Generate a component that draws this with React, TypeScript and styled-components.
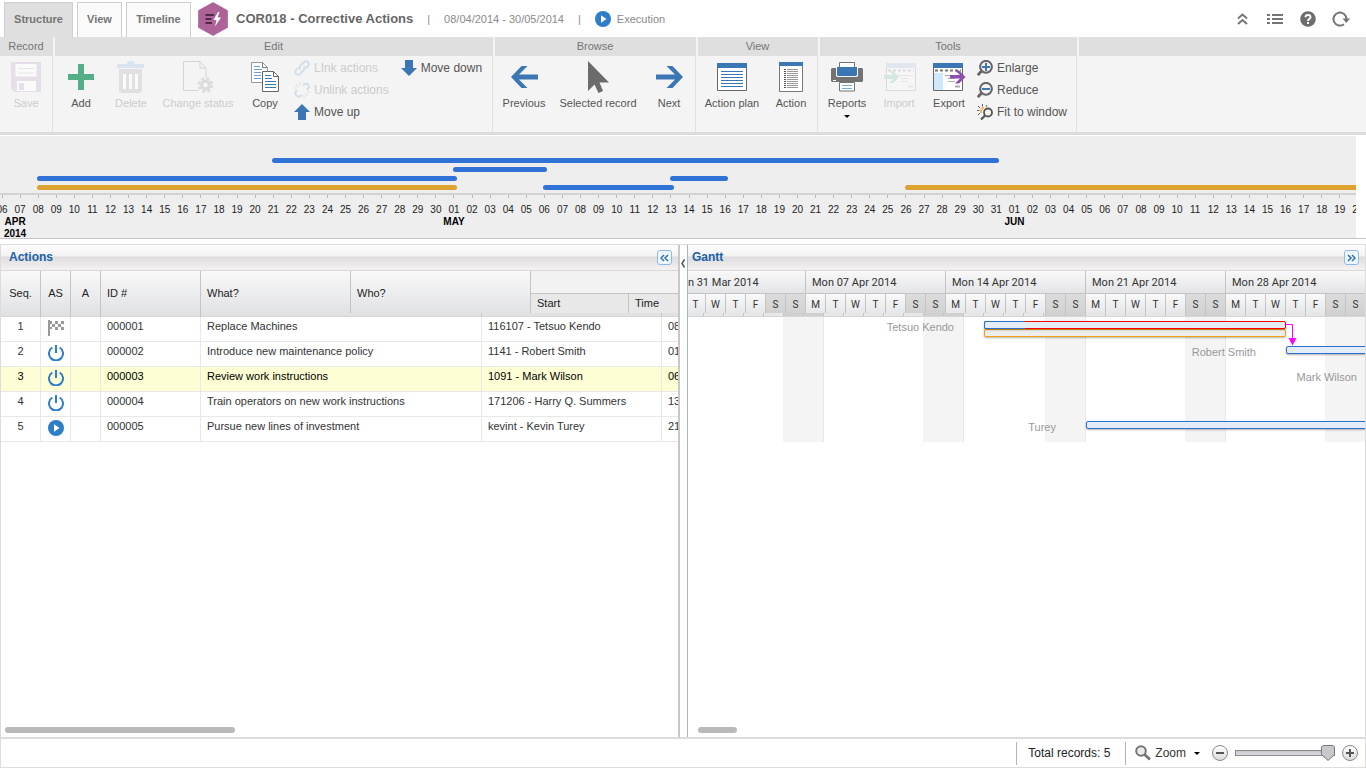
import React, { useState } from "react";
import styled, { createGlobalStyle, css } from "styled-components";

const BLUE = "#3c77b5";
const STATE_BLUE = "#2e7dc9";

const GlobalStyle = createGlobalStyle`
  *, *::before, *::after { box-sizing: border-box; }
  body { margin: 0; background: #fff; }
  body, button, input {
    font-family: "Liberation Sans", Arial, sans-serif;
    font-size: 11px;
    color: #222;
  }
  button { border: 0; padding: 0; margin: 0; background: none; cursor: pointer; }
  button:disabled { cursor: default; }
  svg { display: block; flex: none; }
`;

const Page = styled.div`
  display: flex;
  flex-direction: column;
  min-height: 100vh;
  overflow: hidden;
`;

/* ---------- Title bar ---------- */

const TitleBar = styled.header`
  display: flex;
  align-items: center;
  height: 37px;
  padding-left: 4px;
  padding-right: 16px;
`;

const Tabs = styled.nav`
  display: flex;
  align-self: flex-end;
  gap: 4px;
  height: 35px;
`;

const Tab = styled.button<{ $active?: boolean; $width: number }>`
  width: ${(p) => p.$width}px;
  padding-bottom: 3px;
  border: 1px solid #cfcfcf;
  border-bottom: 0;
  background: ${(p) => (p.$active ? "#dfdfdf" : "#fafafa")};
  color: #757575;
  font-weight: bold;
`;

const Logo = styled.div`
  margin: 0 8px 0 7px;
`;

const Title = styled.h1`
  margin: 0;
  font-size: 13px;
  line-height: 16px;
  color: #666;
`;

const Meta = styled.span`
  margin-left: 14px;
  color: #8a8a8a;
  line-height: 16px;
`;

const State = styled(Meta)`
  display: flex;
  align-items: center;
  gap: 6px;
`;

const HeaderTools = styled.div`
  display: flex;
  gap: 15px;
  margin-left: auto;
`;

const HeaderButton = styled.button`
  width: 18px;
  height: 18px;
  display: grid;
  place-items: center;
`;

/* ---------- Ribbon ---------- */

const Ribbon = styled.div`
  display: flex;
  gap: 2px;
  height: 98px;
  background: #f4f4f4;
  border-bottom: 3px solid #dcdcdc;
`;

const Group = styled.section<{ $width?: number }>`
  ${(p) => (p.$width ? css`flex: 0 0 ${p.$width}px; border-right: 1px solid #e0e0e0;` : css`flex: 1;`)}
`;

const GroupTitle = styled.h2`
  margin: 0;
  height: 19px;
  background: #dfdfdf;
  color: #757575;
  font-size: 11px;
  font-weight: normal;
  line-height: 19px;
  text-align: center;
`;

const GroupBody = styled.div`
  display: flex;
`;

const BigButton = styled.button<{ $width: number }>`
  display: flex;
  flex-direction: column;
  align-items: center;
  width: ${(p) => p.$width}px;
  padding-top: 5px;
  color: #555;
  line-height: 13px;
  white-space: nowrap;
  &:disabled { color: #ccc; }
`;

const BigIcon = styled.span`
  display: grid;
  place-items: center;
  height: 32px;
  margin-bottom: 4px;
`;

const Caret = styled.span`
  margin-top: 5px;
  border: 3px solid transparent;
  border-top-color: #000;
  border-bottom: 0;
`;

const SmallList = styled.div<{ $pad: number }>`
  display: flex;
  flex-direction: column;
  gap: 6px;
  padding: 4px 0 0 ${(p) => p.$pad}px;
`;

const SmallButton = styled.button`
  display: flex;
  align-items: center;
  gap: 4px;
  height: 16px;
  color: #555;
  font-size: 12px;
  line-height: 16px;
  white-space: nowrap;
  &:disabled { color: #ccc; }
`;

/* ---------- Timeline ---------- */

const TimelineBox = styled.section`
  height: 104px;
  padding-right: 10px;
  border-top: 1px solid #fff;
  border-bottom: 1px solid #c4c4c4;
`;

const TimelineClip = styled.div`
  height: 100%;
  overflow: hidden;
  background: #eee;
`;

const TimelineTrack = styled.div`
  position: relative;
  margin: 0 -11px 0 -7px;
`;

const BarArea = styled.div`
  height: 59px;
  border-bottom: 2px solid #d2d2d2;
`;

const SpanBar = styled.div<{ $row: number; $gold?: boolean }>`
  position: absolute;
  top: ${(p) => 22 + p.$row * 9}px;
  height: 5px;
  border-radius: 3px;
  background: ${(p) => (p.$gold ? "#dfa130" : "#3072d6")};
`;

const Days = styled.div`
  display: flex;
`;

const DayCell = styled.div`
  flex: 1 1 0;
  min-width: 0;
  display: flex;
  flex-direction: column;
  align-items: center;
  font-size: 10px;
  line-height: 12px;
  color: #222;
  white-space: nowrap;
  &::before {
    content: "";
    width: 1px;
    height: 3px;
    margin-bottom: 6px;
    background: #bbb;
  }
  strong { color: #000; }
`;

const YearMark = styled.span`
  display: flex;
  flex-direction: column;
  align-items: center;
  padding-left: 26px;
`;

/* ---------- Work area ---------- */

const Work = styled.main`
  display: flex;
  flex: 1;
  margin-top: 5px;
  border: 1px solid #dcdcdc;
  border-bottom: 2px solid #dcdcdc;
`;

const Panel = styled.section<{ $left?: boolean }>`
  display: flex;
  flex-direction: column;
  min-width: 0;
  ${(p) => (p.$left ? css`flex: 0 0 calc(50% - 3px); border-right: 2px solid #c8c8c8;` : css`flex: 1;`)}
`;

const PanelHead = styled.div`
  display: flex;
  align-items: center;
  justify-content: space-between;
  height: 26px;
  padding: 0 6px 0 4px;
  border-bottom: 1px solid #dcd8d8;
  background: linear-gradient(#fdfdfd 0, #f3f3f3 11px, #dedcdc 12px, #f4f2f2 25px);
`;

const PanelTitle = styled.h2<{ $inset?: boolean }>`
  margin: 0;
  padding: 0 0 2px ${(p) => (p.$inset ? 4 : 0)}px;
  color: #1a5fa8;
  font-size: 12px;
  line-height: 22px;
`;

const CollapseButton = styled.button`
  display: grid;
  place-items: center;
  width: 15px;
  height: 15px;
  border: 1px solid #8fb9e6;
  border-radius: 3px;
  background: #eef7fe;
`;

const Splitter = styled.div`
  flex: 0 0 8px;
  border-right: 1px solid #9bb8dc;
  padding-top: 14px;
  button { display: block; }
`;

const Scroller = styled.div`
  overflow: hidden;
  flex: 1;
`;

const ScrollThumb = styled.div<{ $width: number; $left: number }>`
  width: ${(p) => p.$width}px;
  height: 6px;
  margin: 0 0 4px ${(p) => p.$left}px;
  border-radius: 3px;
  background: #b9b9b9;
`;

const headGradient = "linear-gradient(#f9f9f9, #dfe0e2)";

const Table = styled.table`
  width: 760px;
  table-layout: fixed;
  border-spacing: 0;
  thead { background: ${headGradient}; }
  thead tr:last-child th, th[rowspan="3"] { border-bottom: 1px solid #d6d6d6; }
  th[rowspan="2"] { padding-top: 2px; }
`;

const Th = styled.th<{ $center?: boolean; $sub?: boolean; $top?: boolean }>`
  padding: 0 6px;
  border-right: 1px solid #c4c4c4;
  text-align: ${(p) => (p.$center ? "center" : "left")};
  font-weight: normal;
  line-height: 13px;
  color: #222;
  ${(p) => p.$center && css`padding: 0;`}
  ${(p) => p.$sub && css`background: #e8e8e8;`}
  ${(p) => p.$top && css`border-bottom: 1px solid #c4c4c4; background: #f2f2f3;`}
`;

const HeadRow = styled.tr<{ $h: number }>`
  height: ${(p) => p.$h}px;
`;

const Row = styled.tr<{ $selected?: boolean }>`
  height: 25px;
  background: ${(p) => (p.$selected ? "#fefed4" : "#fff")};
  color: ${(p) => (p.$selected ? "#000" : "#333")};
`;

const Td = styled.td<{ $center?: boolean }>`
  padding: 0 6px 5px;
  border-right: 1px solid #e8e8e8;
  border-bottom: 1px solid #e8e8e8;
  line-height: 13px;
  white-space: nowrap;
  overflow: hidden;
  ${(p) => p.$center && css`padding: 0 0 5px; text-align: center;`}
`;

const IconTd = styled(Td)`
  padding: 0 0 2px 7px;
`;

/* ---------- Gantt ---------- */

const GanttHead = styled.div`
  position: relative;
  height: 46px;
  overflow: hidden;
  border-bottom: 1px solid #d6d6d6;
  color: #333;
`;

const Weeks = styled.div`
  display: flex;
  margin-left: -22px;
`;

const Week = styled.div`
  flex: 0 0 140px;
`;

const WeekTitle = styled.div`
  height: 23px;
  padding-left: 6px;
  border-right: 1px solid #c4c4c4;
  border-bottom: 1px solid #c4c4c4;
  background: linear-gradient(#f9f9f9, #e3e4e6);
  font-family: Roboto, "Liberation Sans", sans-serif;
  line-height: 24px;
`;

const WeekDays = styled.div`
  display: flex;
`;

const WeekDay = styled.div<{ $off: boolean }>`
  flex: 0 0 20px;
  height: 22px;
  border-right: 1px solid #c4c4c4;
  background: ${(p) => (p.$off ? "linear-gradient(#dcdcdc, #d0d0d0)" : "linear-gradient(#f9f9f9, #e3e4e6)")};
  font-family: Roboto, "Liberation Sans", sans-serif;
  font-size: 10px;
  line-height: 21px;
  text-align: center;
`;

const TickStrip = styled.div`
  position: absolute;
  left: -4px;
  bottom: 0;
  display: flex;
`;

const TickCell = styled.div<{ $off: boolean }>`
  width: 20px;
  height: 3px;
  border-right: 1px solid #c4c4c4;
  background: ${(p) => (p.$off ? "#d0d0d0" : "#e6e7e8")};
`;

const Canvas = styled.div`
  position: relative;
  flex: 1;
  overflow: hidden;
`;

const Weekend = styled.div`
  position: absolute;
  top: 0;
  width: 41px;
  height: 125px;
  background: #f4f4f4;
  border-right: 1px solid #e9e9e9;
`;

const Owner = styled.span`
  position: absolute;
  color: #999;
  line-height: 13px;
  text-align: right;
  white-space: nowrap;
  transform: translateX(-100%);
`;

const Bar = styled.div<{ $color: string; $bg?: string }>`
  position: absolute;
  height: 8px;
  border: 1px solid ${(p) => p.$color};
  border-radius: 2px;
  background: ${(p) => p.$bg ?? "#e4edf7"};
  box-shadow: 0 1px 2px rgba(0, 0, 0, 0.3);
`;

const BarPart = styled(Bar)`
  border-right: 0;
  border-radius: 2px 0 0 2px;
  box-shadow: none;
`;

const Connector = styled.svg`
  position: absolute;
  left: 598px;
  top: 7px;
`;

/* ---------- Status bar ---------- */

const StatusBar = styled.footer`
  display: flex;
  align-items: center;
  justify-content: flex-end;
  height: 29px;
  padding-right: 7px;
  border: 1px solid #e0dcdc;
  border-top: 0;
  font-size: 12px;
`;

const Total = styled.div`
  width: 110px;
  height: 23px;
  padding-left: 11px;
  border: solid #b4b4b4;
  border-width: 0 1px;
  line-height: 23px;
`;

const ZoomButton = styled.button`
  display: flex;
  align-items: center;
  gap: 4px;
  margin: 0 12px 0 9px;
  color: #333;
  font-size: 12px;
  line-height: 14px;
`;

const ZoomCaret = styled(Caret)`
  margin: 1px 0 0 4px;
`;

const RoundButton = styled.button`
  display: grid;
  place-items: center;
  width: 16px;
  height: 16px;
  border: 1px solid #8a8a8a;
  border-radius: 8px;
  background: linear-gradient(#fff, #dcdcdc);
`;

const SliderBox = styled.div`
  position: relative;
  width: 100px;
  height: 16px;
  margin: 0 7px;
`;

const Slider = styled.input`
  appearance: none;
  display: block;
  width: 100px;
  height: 16px;
  margin: 0;
  background: transparent;
  &::-webkit-slider-runnable-track {
    height: 6px;
    border: 1px solid #8b8b8f;
    background: linear-gradient(#c6c6ca, #dcdce0);
  }
  &::-webkit-slider-thumb {
    appearance: none;
    width: 14px;
    height: 16px;
    margin-top: -6px;
    background: transparent;
  }
`;

const ThumbShape = styled.svg`
  position: absolute;
  top: 0;
  pointer-events: none;
`;

/* ---------- Icons ---------- */

const HexLogo = () => (
  <svg width="30" height="34" viewBox="0 0 30 34">
    <path d="M15 .5 29.5 8.500V25.500L15 33.500 .5 25.500V8.500Z" fill="#ad6298" stroke="#a3588d" strokeWidth=".6" strokeLinejoin="round" />
    <path d="M7.500 13H16M7.500 17H13.500M7.500 21H14" stroke="#4f2947" strokeWidth="1.800" />
    <path d="M20 10 15.500 18H18.500L17 24.500 23 15.500H19.700L21.500 10Z" fill="#fff" />
  </svg>
);

const PlayIcon = () => (
  <svg width="16" height="16" viewBox="0 0 16 16">
    <circle cx="8" cy="8" r="8" fill={STATE_BLUE} />
    <path d="M6 4.200 11.500 8 6 11.800Z" fill="#fff" />
  </svg>
);

const PowerIcon = () => (
  <svg width="16" height="16" viewBox="0 0 16 16" fill="none" stroke={STATE_BLUE} strokeWidth="2">
    <path d="M4.300 2.500A7 7 0 1 0 11.700 2.500M8 0V8" />
  </svg>
);

const FlagIcon = () => (
  <svg width="16" height="16" viewBox="0 0 16 16" fill="#999">
    <path d="M0 0H2V16H0ZM2 1h2v3h-2zM7 1h3v3h-3zM13 1h3v3h-3zM4 4h3v3h-3zM10 4h3v3h-3zM2 7h2v2h-2zM7 7h3v3h-3zM13 7h3v3h-3z" />
  </svg>
);

const UpChevrons = () => (
  <svg width="11" height="12" viewBox="0 0 11 12" fill="none" stroke="#757575" strokeWidth="2">
    <path d="M1 5.500 5.500 1.500 10 5.500M1 11 5.500 7 10 11" />
  </svg>
);

const ListIcon = () => (
  <svg width="16" height="12" viewBox="0 0 16 12" fill="#757575">
    <path d="M0 1h3v2H0zM5 1h11v2H5zM0 5h3v2H0zM5 5h11v2H5zM0 9h3v2H0zM5 9h11v2H5z" />
  </svg>
);

const HelpIcon = () => (
  <svg width="16" height="16" viewBox="0 0 16 16">
    <circle cx="8" cy="8" r="7.800" fill="#6d6d6d" />
    <path d="M5.500 6.200C5.500 3.200 10.500 3.200 10.500 6.200 10.500 8 8 7.800 8 10" fill="none" stroke="#fff" strokeWidth="1.900" />
    <path d="M7 11h2v2H7z" fill="#fff" />
  </svg>
);

const RefreshIcon = () => (
  <svg width="18" height="16" viewBox="0 0 18 16">
    <path d="M12 13.200A6.500 6.500 0 1 1 14.500 8" fill="none" stroke="#757575" strokeWidth="2" />
    <path d="M10.500 7.500H18L14.300 12Z" fill="#757575" />
  </svg>
);

const SaveIcon = () => (
  <svg width="30" height="30" viewBox="0 0 30 30">
    <path d="M0 0H30V30H3L0 27Z" fill="#e6dfe9" />
    <path d="M4.500 2H25.500V14.500H4.500ZM6 19H25V29H6Z" fill="#fafafa" />
    <path d="M7 6.500H23M7 11H23" stroke="#e8e4ea" />
    <path d="M8 21h5v7H8z" fill="#e6dfe9" />
  </svg>
);

const AddIcon = () => (
  <svg width="26" height="26" viewBox="0 0 26 26" fill="#56ae88">
    <path d="M10 0h6v10h10v6H16v10h-6V16H0v-6h10z" />
  </svg>
);

const TrashIcon = () => (
  <svg width="28" height="32" viewBox="0 0 28 32">
    <path d="M1 3H10Q10 0 14 0T18 3H27V7H0V4Z" fill="#d9e4ee" />
    <path d="M2 8H25V30L23 32H4L2 30Z" fill="#e0e0e0" />
    <path d="M7.500 13V28M13.500 13V28M19.500 13V28" stroke="#fafafa" strokeWidth="3" />
  </svg>
);

const StatusIcon = () => (
  <svg width="30" height="32" viewBox="0 0 30 32">
    <path d="M.5 .5H17L23 7V16M15 29.500H.5V.5M17 .5V7H23" fill="none" stroke="#d4d4d4" />
    <circle cx="22.500" cy="24" r="5.500" fill="#ddd" />
    <circle cx="22.500" cy="24" r="6.500" fill="none" stroke="#ddd" strokeWidth="3" strokeDasharray="3 2.100" />
    <circle cx="22.500" cy="24" r="2.200" fill="#f8f8f8" />
  </svg>
);

const CopyIcon = () => (
  <svg width="28" height="30" viewBox="0 0 28 30">
    <path d="M.5 .5H11.500L16.500 5.500V20.500H.5Z" fill="#fff" stroke="#999" />
    <path d="M11.500 .5V5.500H16.500" fill="none" stroke="#777" />
    <path d="M3 4.500H9M3 7.500H11M3 10.500H10M3 13.500H10M3 16.500H10" stroke="#6f9fd0" />
    <path d="M11.500 9.500H22.500L27.500 14.500V29.500H11.500Z" fill="#fff" stroke="#666" />
    <path d="M22.500 9.500V14.500H27.500" fill="none" stroke="#666" />
    <path d="M14 13.500H20M14 16.500H21M14 19.500H25M14 22.500H25M14 25.500H25" stroke={BLUE} />
  </svg>
);

const LinkIcon = ({ broken }: { broken?: boolean }) => (
  <svg width="16" height="16" viewBox="0 0 16 16" fill="none" stroke="#d3deeb" strokeWidth="2">
    {broken ? (
      <>
        <path d="M9 3 11 2Q15 1 15 5L13 8M3 8 1.500 10Q1 15 6 14.500L8 13" />
        <path d="M2 2 5 5M6 0V3M0 6H3M14 14 11 11M10 16V13M16 10H13" stroke="#ddd" strokeWidth="1" />
      </>
    ) : (
      <path d="M6.500 9.500Q4.500 7.500 6.500 5.500L10 2Q12 .5 14 2 15.500 4 14 6L12 8M9.500 6.500Q11.500 8.500 9.500 10.500L6 14Q4 15.500 2 14 .5 12 2 10L4 8" />
    )}
  </svg>
);

const BlockArrow = ({ down }: { down?: boolean }) => (
  <svg width="16" height="16" viewBox="0 0 16 16" fill={BLUE}>
    {down ? <path d="M4 0h8v8h4L8 16 0 8h4z" /> : <path d="M8 0l8 8h-4v8H4V8H0z" />}
  </svg>
);

const SideArrow = ({ right }: { right?: boolean }) => (
  <svg width="27" height="22" viewBox="0 0 27 22" fill={BLUE}>
    {right ? (
      <path d="M0 8.500H19L10.500 0H16.500L27 11 16.500 22H10.500L19 13.500H0Z" />
    ) : (
      <path d="M27 8.500H8L16.500 0H10.500L0 11 10.500 22H16.500L8 13.500H27Z" />
    )}
  </svg>
);

const CursorIcon = () => (
  <svg width="22" height="32" viewBox="0 0 22 32">
    <path d="M1 0V30L7.500 23.500 11.500 32 16 30 12.500 21.500H22Z" fill="#6b6b6b" />
  </svg>
);

const PlanIcon = () => (
  <svg width="30" height="28" viewBox="0 0 30 28">
    <path d="M.5 .5H29.500V27.500H.5Z" fill="#fff" stroke="#666" />
    <path d="M0 0H30V5H0Z" fill={BLUE} />
    <path d="M4 8.500H26M4 11.500H26M4 14.500H26M4 17.500H26M4 20.500H26M4 23.500H26" stroke={BLUE} />
  </svg>
);

const ActionIcon = () => (
  <svg width="24" height="30" viewBox="0 0 24 30">
    <path d="M.5 .5H23.500V29.500H.5Z" fill="#fff" stroke="#777" />
    <path d="M0 0H24V4H0Z" fill={BLUE} />
    <path d="M6 7V27" stroke="#555" strokeWidth="2" strokeDasharray="1 1" />
    <path d="M8 7.500H19M8 9.500H19M8 11.500H19M8 13.500H19M8 15.500H19M8 17.500H19M8 19.500H19M8 21.500H19M8 23.500H19M8 25.500H19" stroke="#999" />
  </svg>
);

const PrinterIcon = () => (
  <svg width="32" height="30" viewBox="0 0 32 30">
    <path d="M1 6H31L32 7V19L31 20H1L0 19V7Z" fill="#737373" />
    <path d="M8.500 .5H23.500V6H8.500Z" fill="#fff" stroke="#737373" />
    <path d="M5 5H27V14L26 15H6L5 14Z" fill="#f4f4f4" />
    <path d="M6 5H26V13L25 14H7L6 13Z" fill={BLUE} />
    <path d="M2 18.500H5" stroke="#fff" />
    <path d="M8.500 20.500H23.500V29H8.500Z" fill="#fff" stroke="#737373" />
    <path d="M11 23.500H21M11 26.500H21" stroke="#80a9d5" />
  </svg>
);

const TransferIcon = ({ out }: { out?: boolean }) => (
  <svg width="33" height="28" viewBox="0 0 33 28" opacity={out ? 1 : 0.18}>
    <g transform={out ? "" : "translate(3 0)"}>
      <path d="M.5 .5H29.500V27.500H.5Z" fill="#fff" stroke="#666" />
      <path d="M0 0H30V5H0Z" fill={out ? BLUE : "#8fb2d6"} />
      <path d="M2 7.500H28" stroke="#777" strokeWidth="2" strokeDasharray="3 2" />
      {out && <path d="M1 10H10V27H1Z" fill="#cfe8fb" />}
      <path d="M12 12.500H27M15 15.500H22M15 18.500H22" stroke="#aaa" />
      <path d="M22 23.500H27" stroke="#aaa" strokeWidth="2" />
    </g>
    {out ? (
      <path d="M17 12H27L22 7.500H26L32.500 14 26 20.500H22L27 15.500H17Z" fill="#8b4fae" />
    ) : (
      <path d="M1 12H10L6 8H10L16 14 10 20H6L10 16H1Z" fill="#56ae88" />
    )}
  </svg>
);

const MagnifyIcon = ({ plus }: { plus?: boolean }) => (
  <svg width="16" height="16" viewBox="0 0 16 16" fill="none">
    <circle cx="9" cy="6.800" r="5.900" stroke="#666" strokeWidth="2.100" />
    <path d="M5 10.500.8 15.200" stroke="#666" strokeWidth="2.800" />
    <path d={plus ? "M5 7H13M9 3V11" : "M5 7H13"} stroke={BLUE} strokeWidth="2" />
  </svg>
);

const FitIcon = () => (
  <svg width="16" height="16" viewBox="0 0 16 16" fill="none">
    <path d="M1 2 3 4M5.500 0V2.500M0 6.500H2.500M10 1 9 3M1 11 3 9" stroke="#666" />
    <path d="M7 3.500Q3.500 4.500 4 9" stroke="#f5b968" strokeWidth="2" />
    <circle cx="11" cy="8.500" r="4" stroke="#555" strokeWidth="1.800" />
    <path d="M8 11.500 4 15.500" stroke="#555" strokeWidth="2.200" />
  </svg>
);

const DoubleChevron = ({ right }: { right?: boolean }) => (
  <svg width="9" height="8" viewBox="0 0 9 8" fill="none" stroke="#2f70b0" strokeWidth="1.500">
    <path d={right ? "M1 1 4 4 1 7M5 1 8 4 5 7" : "M4 1 1 4 4 7M8 1 5 4 8 7"} />
  </svg>
);

const SearchIcon = () => (
  <svg width="16" height="16" viewBox="0 0 16 16" fill="none" stroke="#757575">
    <circle cx="6" cy="6" r="4.800" strokeWidth="2" fill="#e9e9e9" />
    <path d="M9.500 9.500 15 14.500" strokeWidth="3" />
  </svg>
);

/* ---------- Data ---------- */

const FIRST_DAY = new Date(2014, 3, 6);
const DAY_COUNT = 76;
const MONTHS = ["JAN", "FEB", "MAR", "APR", "MAY", "JUN"];

const days = Array.from({ length: DAY_COUNT }, (_, i) => {
  const d = new Date(2014, 3, 6 + i);
  return { date: d.getDate(), month: d.getMonth(), first: d.getDate() === 1 };
});

const dayIndex = (month: number, date: number) =>
  Math.round((new Date(2014, month - 1, date).getTime() - FIRST_DAY.getTime()) / 86400000);

const spans = [
  { row: 0, from: dayIndex(4, 21), to: dayIndex(5, 31) },
  { row: 1, from: dayIndex(5, 1), to: dayIndex(5, 6) },
  { row: 2, from: dayIndex(4, 8), to: dayIndex(5, 1) },
  { row: 2, from: dayIndex(5, 13), to: dayIndex(5, 16) },
  { row: 3, from: dayIndex(4, 8), to: dayIndex(5, 1), gold: true },
  { row: 3, from: dayIndex(5, 6), to: dayIndex(5, 13) },
  { row: 3, from: dayIndex(5, 26), to: dayIndex(6, 21), gold: true },
];

const columns = [40, 30, 30, 100, 150, 131, 49, 98, 33];

const actions = [
  { id: "000001", icon: <FlagIcon />, what: "Replace Machines", who: "116107 - Tetsuo Kendo", start: "08" },
  { id: "000002", icon: <PowerIcon />, what: "Introduce new maintenance policy", who: "1141 - Robert Smith", start: "01" },
  { id: "000003", icon: <PowerIcon />, what: "Review work instructions", who: "1091 - Mark Wilson", start: "06", selected: true },
  { id: "000004", icon: <PowerIcon />, what: "Train operators on new work instructions", who: "171206 - Harry Q. Summers", start: "13" },
  { id: "000005", icon: <PlayIcon />, what: "Pursue new lines of investment", who: "kevint - Kevin Turey", start: "21" },
];

const weeks = ["31 Mar", "07 Apr", "14 Apr", "21 Apr", "28 Apr"];
const weekendOffsets = [95, 235, 357, 497, 637];

const ganttRows = [
  { row: 0, owner: "Tetsuo Kendo", start: 296 },
  { row: 1, owner: "Robert Smith", start: 598 },
  { row: 2, owner: "Mark Wilson", start: 699 },
  { row: 4, owner: "Turey", start: 398 },
];

/* ---------- Composition ---------- */

type ToolProps = { label: string; width: number; icon: React.ReactNode; disabled?: boolean; menu?: boolean };

const Tool = ({ label, width, icon, disabled, menu }: ToolProps) => (
  <BigButton $width={width} disabled={disabled}>
    <BigIcon>{icon}</BigIcon>
    {label}
    {menu && <Caret />}
  </BigButton>
);

const RibbonBar = () => (
  <Ribbon>
    <Group $width={53}>
      <GroupTitle>Record</GroupTitle>
      <GroupBody>
        <Tool label="Save" width={52} icon={<SaveIcon />} disabled />
      </GroupBody>
    </Group>
    <Group $width={438}>
      <GroupTitle>Edit</GroupTitle>
      <GroupBody>
        <Tool label="Add" width={52} icon={<AddIcon />} />
        <Tool label="Delete" width={48} icon={<TrashIcon />} disabled />
        <Tool label="Change status" width={86} icon={<StatusIcon />} disabled />
        <Tool label="Copy" width={48} icon={<CopyIcon />} />
        <SmallList $pad={5}>
          <SmallButton disabled><LinkIcon />LInk actions</SmallButton>
          <SmallButton disabled><LinkIcon broken />Unlink actions</SmallButton>
          <SmallButton><BlockArrow />Move up</SmallButton>
        </SmallList>
        <SmallList $pad={12}>
          <SmallButton><BlockArrow down />Move down</SmallButton>
        </SmallList>
      </GroupBody>
    </Group>
    <Group $width={201}>
      <GroupTitle>Browse</GroupTitle>
      <GroupBody>
        <Tool label="Previous" width={58} icon={<SideArrow />} />
        <Tool label="Selected record" width={90} icon={<CursorIcon />} />
        <Tool label="Next" width={52} icon={<SideArrow right />} />
      </GroupBody>
    </Group>
    <Group $width={120}>
      <GroupTitle>View</GroupTitle>
      <GroupBody>
        <Tool label="Action plan" width={68} icon={<PlanIcon />} />
        <Tool label="Action" width={50} icon={<ActionIcon />} />
      </GroupBody>
    </Group>
    <Group $width={257}>
      <GroupTitle>Tools</GroupTitle>
      <GroupBody>
        <Tool label="Reports" width={54} icon={<PrinterIcon />} menu />
        <Tool label="Import" width={50} icon={<TransferIcon />} disabled />
        <Tool label="Export" width={50} icon={<TransferIcon out />} />
        <SmallList $pad={3}>
          <SmallButton><MagnifyIcon plus />Enlarge</SmallButton>
          <SmallButton><MagnifyIcon />Reduce</SmallButton>
          <SmallButton><FitIcon />Fit to window</SmallButton>
        </SmallList>
      </GroupBody>
    </Group>
    <Group>
      <GroupTitle />
    </Group>
  </Ribbon>
);

const Timeline = () => (
  <TimelineBox>
    <TimelineClip>
      <TimelineTrack>
        <BarArea>
          {spans.map((s, i) => (
            <SpanBar
              key={i}
              $row={s.row}
              $gold={s.gold}
              style={{
                left: `calc(${((s.from + 0.5) / DAY_COUNT) * 100}% - 1px)`,
                width: `calc(${((s.to - s.from) / DAY_COUNT) * 100}% + 4px)`,
              }}
            />
          ))}
        </BarArea>
        <Days>
          {days.map((d, i) => (
            <DayCell key={i}>
              {String(d.date).padStart(2, "0")}
              {d.first && <strong>{MONTHS[d.month]}</strong>}
              {i === 0 && (
                <YearMark>
                  <strong>APR</strong>
                  <strong>2014</strong>
                </YearMark>
              )}
            </DayCell>
          ))}
        </Days>
      </TimelineTrack>
    </TimelineClip>
  </TimelineBox>
);

const ActionsTable = () => (
  <Table>
    <colgroup>
      {columns.map((w, i) => <col key={i} style={{ width: w }} />)}
      <col />
    </colgroup>
    <thead>
      <HeadRow $h={23}>
        <Th rowSpan={3} $center>Seq.</Th>
        <Th rowSpan={3} $center>AS</Th>
        <Th rowSpan={3} $center>A</Th>
        <Th rowSpan={3}>ID #</Th>
        <Th rowSpan={2}>What?</Th>
        <Th rowSpan={2} colSpan={2}>Who?</Th>
        <Th colSpan={3} $top />
      </HeadRow>
      <HeadRow $h={19}>
        <Th $sub>Start</Th>
        <Th $sub colSpan={2}>Time</Th>
      </HeadRow>
      <HeadRow $h={4}>
        <Th colSpan={2} />
        <Th colSpan={3} />
        <Th />
      </HeadRow>
    </thead>
    <tbody>
      {actions.map((a, i) => (
        <Row key={a.id} $selected={a.selected}>
          <Td $center>{i + 1}</Td>
          <IconTd>{a.icon}</IconTd>
          <Td />
          <Td>{a.id}</Td>
          <Td colSpan={2}>{a.what}</Td>
          <Td colSpan={3}>{a.who}</Td>
          <Td>{a.start}</Td>
        </Row>
      ))}
    </tbody>
  </Table>
);

const Gantt = () => (
  <>
    <GanttHead>
      <Weeks>
        {weeks.map((w) => (
          <Week key={w}>
            <WeekTitle>Mon {w} 2014</WeekTitle>
            <WeekDays>
              {"MTWTFSS".split("").map((d, i) => <WeekDay key={i} $off={i > 4}>{d}</WeekDay>)}
            </WeekDays>
          </Week>
        ))}
      </Weeks>
      <TickStrip>
        {Array.from({ length: 18 }, (_, i) => <TickCell key={i} $off={[5, 6, 12, 13].includes(i)} />)}
      </TickStrip>
    </GanttHead>
    <Canvas>
      {weekendOffsets.map((x) => <Weekend key={x} style={{ left: x }} />)}
      {ganttRows.map((g) => (
        <Owner key={g.owner} style={{ left: g.start - 30, top: g.row * 25 + 4 }}>{g.owner}</Owner>
      ))}
      <Bar $color="#f5a010" $bg="#ededec" style={{ left: 296, top: 12, width: 302 }} />
      <Bar $color="#f00" style={{ left: 296, top: 4, width: 302 }} />
      <BarPart $color="#2f6fd0" style={{ left: 296, top: 4, width: 41 }} />
      <Bar $color="#2f6fd0" style={{ left: 598, top: 29, width: 200 }} />
      <Bar $color="#2f6fd0" style={{ left: 398, top: 104, width: 400 }} />
      <Connector width="12" height="22" viewBox="0 0 12 22">
        <path d="M0 .5H6.500V15" fill="none" stroke="#f0f" />
        <path d="M2.500 14H10.500L6.500 21.500Z" fill="#f0f" />
      </Connector>
    </Canvas>
  </>
);

export default function App() {
  const [zoom, setZoom] = useState(100);

  return (
    <Page>
      <GlobalStyle />
      <TitleBar>
        <Tabs>
          <Tab $active $width={69}>Structure</Tab>
          <Tab $width={45}>View</Tab>
          <Tab $width={65}>Timeline</Tab>
        </Tabs>
        <Logo><HexLogo /></Logo>
        <Title>COR018 - Corrective Actions</Title>
        <Meta>|</Meta>
        <Meta>08/04/2014 - 30/05/2014</Meta>
        <Meta>|</Meta>
        <State><PlayIcon />Execution</State>
        <HeaderTools>
          <HeaderButton aria-label="Collapse ribbon"><UpChevrons /></HeaderButton>
          <HeaderButton aria-label="List"><ListIcon /></HeaderButton>
          <HeaderButton aria-label="Help"><HelpIcon /></HeaderButton>
          <HeaderButton aria-label="Refresh"><RefreshIcon /></HeaderButton>
        </HeaderTools>
      </TitleBar>
      <RibbonBar />
      <Timeline />
      <Work>
        <Panel $left>
          <PanelHead>
            <PanelTitle $inset>Actions</PanelTitle>
            <CollapseButton aria-label="Collapse actions"><DoubleChevron /></CollapseButton>
          </PanelHead>
          <Scroller><ActionsTable /></Scroller>
          <ScrollThumb $width={230} $left={4} />
        </Panel>
        <Splitter>
          <button aria-label="Collapse panel">
            <svg width="7" height="9" viewBox="0 0 7 9" fill="none" stroke="#555" strokeWidth="1.500">
              <path d="M4.500 .5 2 4.500 4.500 8.500" />
            </svg>
          </button>
        </Splitter>
        <Panel>
          <PanelHead>
            <PanelTitle>Gantt</PanelTitle>
            <CollapseButton aria-label="Collapse gantt"><DoubleChevron right /></CollapseButton>
          </PanelHead>
          <Gantt />
          <ScrollThumb $width={39} $left={10} />
        </Panel>
      </Work>
      <StatusBar>
        <Total>Total records: 5</Total>
        <ZoomButton><SearchIcon />Zoom<ZoomCaret /></ZoomButton>
        <RoundButton aria-label="Zoom out" onClick={() => setZoom(Math.max(0, zoom - 10))}>
          <svg width="10" height="10" viewBox="0 0 10 10"><path d="M1 5H9" stroke="#555" strokeWidth="2" /></svg>
        </RoundButton>
        <SliderBox>
          <Slider
            type="range"
            aria-label="Zoom level"
            min={0}
            max={100}
            value={zoom}
            onChange={(e) => setZoom(Number(e.target.value))}
          />
          <ThumbShape width="14" height="16" viewBox="0 0 14 16" style={{ left: zoom * 0.86 }}>
            <path d="M2 .5H12L13.500 2V9.500L7 15.500 .5 9.500V2Z" fill="#c9c9cd" stroke="#77777b" />
          </ThumbShape>
        </SliderBox>
        <RoundButton aria-label="Zoom in" onClick={() => setZoom(Math.min(100, zoom + 10))}>
          <svg width="10" height="10" viewBox="0 0 10 10"><path d="M1 5H9M5 1V9" stroke="#555" strokeWidth="2" /></svg>
        </RoundButton>
      </StatusBar>
    </Page>
  );
}
